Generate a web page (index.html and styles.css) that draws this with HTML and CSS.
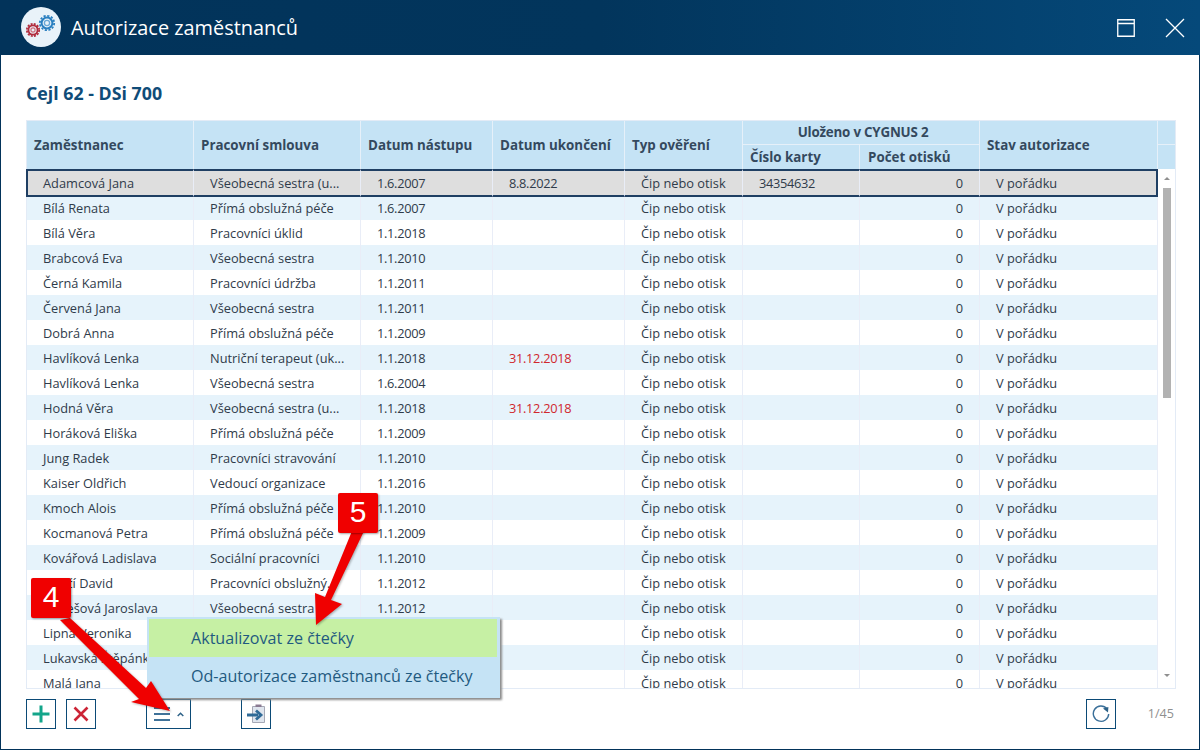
FILE: index.html
```html
<!DOCTYPE html>
<html lang="cs">
<head>
<meta charset="utf-8">
<title>Autorizace zaměstnanců</title>
<link rel="stylesheet" href="styles.css">
</head>
<body>
<div class="window">
  <header class="titlebar">
    <div class="logo">
      <svg width="40" height="40" viewBox="0 0 40 40">
        <g fill="none" stroke="#2a7fc0">
          <circle cx="26" cy="16" r="7.2" stroke-width="1.8" stroke-dasharray="2.2 1.57"/>
          <circle cx="26" cy="16" r="5.4" stroke-width="2"/>
          <circle cx="26" cy="16" r="2.6" stroke-width="1.3" stroke="#6aa7d6"/>
        </g>
        <g fill="none" stroke="#b02a3c">
          <circle cx="12" cy="23" r="6.2" stroke-width="1.7" stroke-dasharray="2 1.25"/>
          <circle cx="12" cy="23" r="4.6" stroke-width="1.9"/>
          <circle cx="12" cy="23" r="2.1" stroke-width="1.2" stroke="#d0707e"/>
        </g>
      </svg>
    </div>
    <h1 class="title">Autorizace zaměstnanců</h1>
    <div class="winbtns">
      <svg width="18" height="18" viewBox="0 0 18 18"><path d="M.75.75h16.5v16.5H.75zM.75 4.5h16.5" fill="none" stroke="#fff" stroke-width="1.3"/></svg>
      <svg width="20" height="20" viewBox="0 0 20 20"><path d="M1 1l18 18M19 1L1 19" fill="none" stroke="#fff" stroke-width="1.3"/></svg>
    </div>
  </header>
  <main class="content">
    <h2 class="heading">Cejl 62 - DSi 700</h2>
    <div class="table">
      <div class="thead">
        <div class="th th-span c1">Zaměstnanec</div>
        <div class="th th-span c2">Pracovní smlouva</div>
        <div class="th th-span c3">Datum nástupu</div>
        <div class="th th-span c4">Datum ukončení</div>
        <div class="th th-span c5">Typ ověření</div>
        <div class="th th-group">Uloženo v CYGNUS 2</div>
        <div class="th th-sub c6">Číslo karty</div>
        <div class="th th-sub c7">Počet otisků</div>
        <div class="th th-span c8">Stav autorizace</div>
        <div class="th th-end1"></div>
        <div class="th th-end2"></div>
      </div>
      <div class="tbody">
        <div class="rows">
          <div class="row selected"><span>Adamcová Jana</span><span>Všeobecná sestra (u...</span><span class="date">1.6.2007</span><span class="date date-end">8.8.2022</span><span>Čip nebo otisk</span><span class="date">34354632</span><span class="num">0</span><span>V pořádku</span></div>
          <div class="row"><span>Bílá Renata</span><span>Přímá obslužná péče</span><span class="date">1.6.2007</span><span></span><span>Čip nebo otisk</span><span></span><span class="num">0</span><span>V pořádku</span></div>
          <div class="row"><span>Bílá Věra</span><span>Pracovníci úklid</span><span class="date">1.1.2018</span><span></span><span>Čip nebo otisk</span><span></span><span class="num">0</span><span>V pořádku</span></div>
          <div class="row"><span>Brabcová Eva</span><span>Všeobecná sestra</span><span class="date">1.1.2010</span><span></span><span>Čip nebo otisk</span><span></span><span class="num">0</span><span>V pořádku</span></div>
          <div class="row"><span>Černá Kamila</span><span>Pracovníci údržba</span><span class="date">1.1.2011</span><span></span><span>Čip nebo otisk</span><span></span><span class="num">0</span><span>V pořádku</span></div>
          <div class="row"><span>Červená Jana</span><span>Všeobecná sestra</span><span class="date">1.1.2011</span><span></span><span>Čip nebo otisk</span><span></span><span class="num">0</span><span>V pořádku</span></div>
          <div class="row"><span>Dobrá Anna</span><span>Přímá obslužná péče</span><span class="date">1.1.2009</span><span></span><span>Čip nebo otisk</span><span></span><span class="num">0</span><span>V pořádku</span></div>
          <div class="row"><span>Havlíková Lenka</span><span>Nutriční terapeut (uk...</span><span class="date">1.1.2018</span><span class="date date-end expired">31.12.2018</span><span>Čip nebo otisk</span><span></span><span class="num">0</span><span>V pořádku</span></div>
          <div class="row"><span>Havlíková Lenka</span><span>Všeobecná sestra</span><span class="date">1.6.2004</span><span></span><span>Čip nebo otisk</span><span></span><span class="num">0</span><span>V pořádku</span></div>
          <div class="row"><span>Hodná Věra</span><span>Všeobecná sestra (u...</span><span class="date">1.1.2018</span><span class="date date-end expired">31.12.2018</span><span>Čip nebo otisk</span><span></span><span class="num">0</span><span>V pořádku</span></div>
          <div class="row"><span>Horáková Eliška</span><span>Přímá obslužná péče</span><span class="date">1.1.2009</span><span></span><span>Čip nebo otisk</span><span></span><span class="num">0</span><span>V pořádku</span></div>
          <div class="row"><span>Jung Radek</span><span>Pracovníci stravování</span><span class="date">1.1.2010</span><span></span><span>Čip nebo otisk</span><span></span><span class="num">0</span><span>V pořádku</span></div>
          <div class="row"><span>Kaiser Oldřich</span><span>Vedoucí organizace</span><span class="date">1.1.2016</span><span></span><span>Čip nebo otisk</span><span></span><span class="num">0</span><span>V pořádku</span></div>
          <div class="row"><span>Kmoch Alois</span><span>Přímá obslužná péče</span><span class="date">1.1.2010</span><span></span><span>Čip nebo otisk</span><span></span><span class="num">0</span><span>V pořádku</span></div>
          <div class="row"><span>Kocmanová Petra</span><span>Přímá obslužná péče</span><span class="date">1.1.2009</span><span></span><span>Čip nebo otisk</span><span></span><span class="num">0</span><span>V pořádku</span></div>
          <div class="row"><span>Kovářová Ladislava</span><span>Sociální pracovníci</span><span class="date">1.1.2010</span><span></span><span>Čip nebo otisk</span><span></span><span class="num">0</span><span>V pořádku</span></div>
          <div class="row"><span>Krejčí David</span><span>Pracovníci obslužný...</span><span class="date">1.1.2012</span><span></span><span>Čip nebo otisk</span><span></span><span class="num">0</span><span>V pořádku</span></div>
          <div class="row"><span>Kunešová Jaroslava</span><span>Všeobecná sestra</span><span class="date">1.1.2012</span><span></span><span>Čip nebo otisk</span><span></span><span class="num">0</span><span>V pořádku</span></div>
          <div class="row"><span>Lipná Veronika</span><span></span><span></span><span></span><span>Čip nebo otisk</span><span></span><span class="num">0</span><span>V pořádku</span></div>
          <div class="row"><span>Lukavská Štěpánka</span><span></span><span></span><span></span><span>Čip nebo otisk</span><span></span><span class="num">0</span><span>V pořádku</span></div>
          <div class="row"><span>Malá Jana</span><span></span><span></span><span></span><span>Čip nebo otisk</span><span></span><span class="num">0</span><span>V pořádku</span></div>
        </div>
        <div class="scrollbar">
          <span class="sb-up"></span>
          <span class="sb-thumb"></span>
          <span class="sb-down"></span>
        </div>
      </div>
    </div>
    <div class="toolbar">
      <button class="btn">
        <svg width="18" height="18" viewBox="0 0 18 18"><path d="M9 .5v17M.5 9h17" stroke="#13a58a" stroke-width="3" fill="none"/></svg>
      </button>
      <button class="btn btn-del">
        <svg width="16" height="16" viewBox="0 0 16 16"><path d="M1.5 1.5l13 13M14.5 1.5l-13 13" stroke="#cc2436" stroke-width="2.6" fill="none"/></svg>
      </button>
      <button class="btn btn-menu">
        <svg width="16" height="14" viewBox="0 0 16 14"><path d="M0 1h16M0 7h16M0 13h16" stroke="#3f7299" stroke-width="2" fill="none"/></svg>
        <svg width="7" height="5" viewBox="0 0 7 5"><path d="M.7 4l2.8-2.7L6.3 4" stroke="#2d6288" stroke-width="1.5" fill="none"/></svg>
      </button>
      <button class="btn btn-import">
        <svg width="20" height="21" viewBox="0 0 20 21">
          <path d="M6.5 2.5h12v16h-12z" fill="#dfe5ee" stroke="#a5a8b5"/>
          <path d="M9.5 .5h6v2.5h-6z" fill="#8a7a92"/>
          <path d="M1 11h11" stroke="#2f6a97" stroke-width="3" fill="none"/>
          <path d="M10 6.5l5 4.5-5 4.5" stroke="#2f6a97" stroke-width="2.8" fill="none"/>
        </svg>
      </button>
      <button class="btn btn-refresh">
        <svg width="18" height="18" viewBox="0 0 18 18">
          <path d="M15 3.8A7.7 7.7 0 1 0 16.7 9" stroke="#3a6f99" stroke-width="1.4" fill="none"/>
          <path d="M11 3.6l5.4-1.6-.4 5.6z" fill="#2d6288"/>
        </svg>
      </button>
      <span class="pager">1/45</span>
    </div>
    <div class="menu">
      <div class="menu-item menu-active">Aktualizovat ze čtečky</div>
      <div class="menu-item">Od-autorizace zaměstnanců ze čtečky</div>
    </div>
  </main>
  <svg class="arrows" width="1200" height="750" viewBox="0 0 1200 750">
    <polygon points="70,618 146,688 151,681 170,711 131,702 139,699 60,620" fill="#f00000"/>
    <polygon points="352,531 364,531 331,600 342,604 316,625 315,593 325,597" fill="#f00000"/>
  </svg>
  <div class="callout callout-4">4</div>
  <div class="callout callout-5">5</div>
</div>
</body>
</html>
```

FILE: styles.css
```css
* { box-sizing: border-box; }
html, body { margin: 0; padding: 0; }
body {
  width: 1200px;
  height: 750px;
  overflow: hidden;
  background: #fff;
  font-family: "Open Sans", "Liberation Sans", sans-serif;
  color: #2f3b4a;
}
.window {
  position: relative;
  width: 1200px;
  height: 750px;
  display: flex;
  flex-direction: column;
  border: 1px solid #02335a;
  border-top: 0;
}
.titlebar {
  flex: none;
  height: 55px;
  margin: 0 -1px;
  display: flex;
  align-items: center;
  padding: 0 15px 0 21px;
  background: linear-gradient(90deg, #02335a 0%, #02355c 50%, #05497a 100%);
}
.logo {
  width: 40px;
  height: 40px;
  border-radius: 50%;
  background: #e9f2f9;
  margin-top: -1px;
}
.title {
  margin: 0 0 0 10px;
  font-size: 19.9px;
  font-weight: 400;
  color: #fff;
}
.winbtns {
  margin-left: auto;
  display: flex;
  align-items: center;
  gap: 30px;
}
.content {
  position: relative;
  flex: 1;
  padding: 0 23px 0 25px;
}
.heading {
  margin: 27px 0 15px;
  height: 23px;
  line-height: 23px;
  font-size: 17.8px;
  font-weight: 700;
  color: #0f4c78;
}
.table {
  width: 1150px;
  height: 569px;
  border: 1px solid #e3ebf6;
}
.thead {
  display: grid;
  grid-template-columns: 167px 167px 132px 132px 118px 117px 120px 178px 17px;
  grid-template-rows: 24px 24px;
  height: 48px;
  background: #c5e3f5;
}
.th {
  display: flex;
  align-items: center;
  padding: 0 7px;
  font-size: 13.35px;
  font-weight: 700;
  color: #34495e;
  border-right: 1px solid #e6f0f9;
  white-space: nowrap;
}
.th-span { grid-row: 1 / 3; }
.c1 { grid-column: 1; }
.c2 { grid-column: 2; }
.c3 { grid-column: 3; }
.c4 { grid-column: 4; }
.c5 { grid-column: 5; }
.c6 { grid-column: 6; grid-row: 2; }
.c7 { grid-column: 7; grid-row: 2; padding-left: 8px; }
.c8 { grid-column: 8; }
.th-group {
  grid-column: 6 / 8;
  grid-row: 1;
  justify-content: center;
  padding: 0 0 2px 4px;
  letter-spacing: -0.2px;
  border-bottom: 1px solid #e6f0f9;
}
.th-end1 { grid-column: 9; grid-row: 1; border-right: 0; border-bottom: 1px solid #e6f0f9; }
.th-end2 { grid-column: 9; grid-row: 2; border-right: 0; }
.tbody {
  display: flex;
  height: 519px;
  overflow-x: visible;
  overflow-y: clip;
}
.rows { width: 1131px; flex: none; padding-top: 1px; }
.row {
  display: grid;
  grid-template-columns: 167px 167px 132px 132px 118px 117px 120px 178px;
  height: 25px;
  background: #fff;
  font-size: 12.8px;
  line-height: 26px;
  color: #2f3b4a;
}
.row:nth-child(even) { background: #e6f3fb; }
.row > span {
  padding: 0 16px;
  border-right: 1px solid #e9edf7;
  white-space: nowrap;
  overflow: hidden;
}
.row > .date { letter-spacing: -0.3px; }
.row > .num { text-align: right; padding-right: 16px; }
.selected {
  position: relative;
  z-index: 1;
  height: 28px;
  margin-top: -1px;
  margin-bottom: -2px;
  background: #dedede;
  line-height: 24px;
}
.selected > span {
  border-top: 2px solid #1f3f63;
  border-bottom: 2px solid #1f3f63;
}
.selected > span:first-child {
  margin-left: -1px;
  padding-left: 15px;
  border-left: 2px solid #1f3f63;
}
.selected > span:last-child { border-right: 2px solid #1f3f63; }
.expired { color: #d0282e; }
.scrollbar {
  flex: 1;
  position: relative;
  display: flex;
  flex-direction: column;
  align-items: center;
  padding-top: 1px;
  background: #fff;
}
.sb-up, .sb-down {
  width: 0;
  height: 0;
  border-left: 3px solid transparent;
  border-right: 3px solid transparent;
}
.sb-up { border-bottom: 3px solid #8f8f8f; margin-top: 7px; }
.sb-thumb { width: 8px; height: 210px; margin-top: 8px; background: #b2b2b2; }
.sb-down { border-top: 3px solid #8f8f8f; margin-top: 276px; }
.toolbar {
  display: flex;
  align-items: flex-start;
  margin-top: 10px;
}
.btn {
  display: flex;
  align-items: center;
  justify-content: center;
  gap: 7px;
  width: 30px;
  height: 30px;
  padding: 0;
  background: #fff;
  border: 1px solid #0b4a76;
  border-radius: 0;
}
.btn-del { margin-left: 10px; }
.btn-menu { width: 45px; margin-left: 50px; }
.btn-import { margin-left: 50px; }
.btn-refresh { margin-left: auto; }
.pager {
  margin: 6px 2px 0 32px;
  font-size: 12.6px;
  line-height: 18px;
  color: #8f8f8f;
}
.menu {
  position: absolute;
  left: 146px;
  top: 562px;
  width: 353px;
  border: 2px solid #c5e3f5;
  box-shadow: 2px 2px 2px #8c8c8c;
  background: #c5e3f5;
}
.menu-item {
  height: 39px;
  padding-left: 42px;
  font-size: 16.1px;
  line-height: 38px;
  color: #1f5a80;
  white-space: nowrap;
  background: #c5e3f5;
}
.menu-active { height: 38px; background: #c6f0a4; margin-right: 1px; }
.arrows {
  position: absolute;
  left: -1px;
  top: 0;
  pointer-events: none;
  filter: drop-shadow(1px 1px 1px rgba(0,0,0,.3));
}
.callout {
  position: absolute;
  width: 40px;
  height: 40px;
  background: #f00000;
  border-radius: 2px;
  color: #fff;
  font-size: 30px;
  line-height: 38px;
  text-align: center;
  font-family: "Liberation Sans", sans-serif;
  box-shadow: 1px 1px 2px rgba(0,0,0,.35);
}
.callout-4 { left: 30px; top: 578px; }
.callout-5 { left: 337px; top: 493px; }
```
